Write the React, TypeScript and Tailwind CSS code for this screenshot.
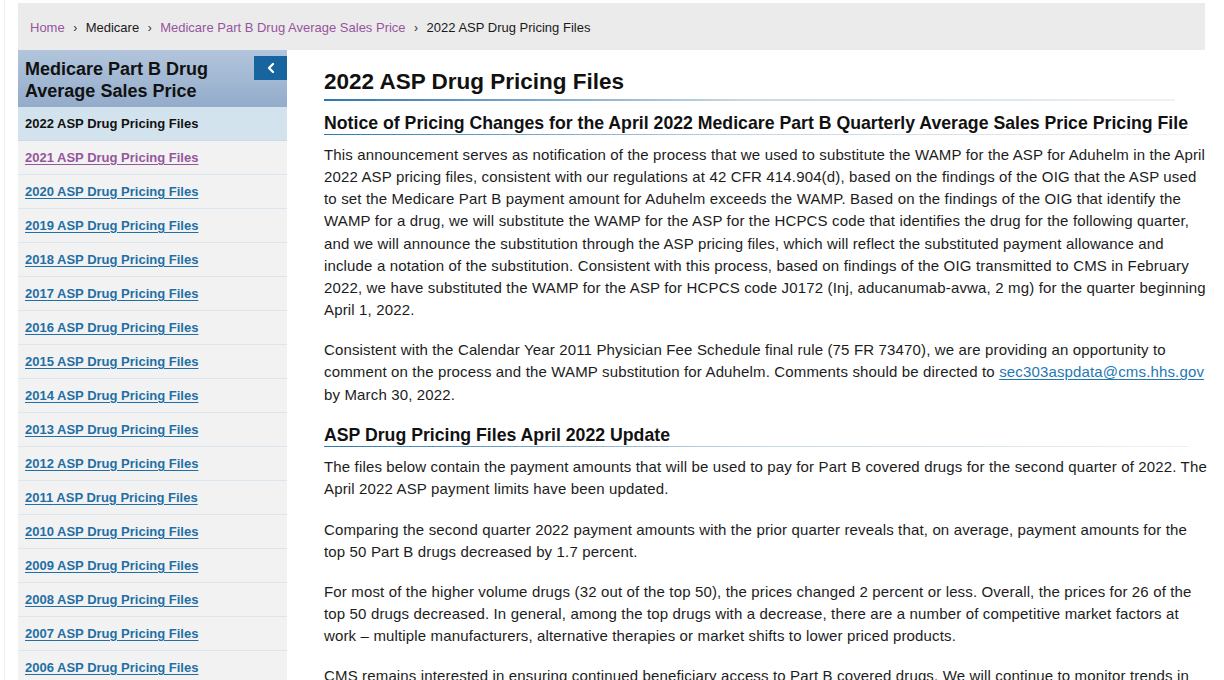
import React from "react";
import { ChevronLeft } from "lucide-react";

const years = [
  "2021", "2020", "2019", "2018", "2017", "2016", "2015", "2014", "2013",
  "2012", "2011", "2010", "2009", "2008", "2007", "2006", "2005", "2004",
];

const notice = [
  "This announcement serves as notification of the process that we used to substitute the WAMP for the ASP for Aduhelm in the April",
  "2022 ASP pricing files, consistent with our regulations at 42 CFR 414.904(d), based on the findings of the OIG that the ASP used",
  "to set the Medicare Part B payment amount for Aduhelm exceeds the WAMP. Based on the findings of the OIG that identify the",
  "WAMP for a drug, we will substitute the WAMP for the ASP for the HCPCS code that identifies the drug for the following quarter,",
  "and we will announce the substitution through the ASP pricing files, which will reflect the substituted payment allowance and",
  "include a notation of the substitution. Consistent with this process, based on findings of the OIG transmitted to CMS in February",
  "2022, we have substituted the WAMP for the ASP for HCPCS code J0172 (Inj, aducanumab-avwa, 2 mg) for the quarter beginning",
  "April 1, 2022.",
];

const update = [
  [
    "The files below contain the payment amounts that will be used to pay for Part B covered drugs for the second quarter of 2022. The",
    "April 2022 ASP payment limits have been updated.",
  ],
  [
    "Comparing the second quarter 2022 payment amounts with the prior quarter reveals that, on average, payment amounts for the",
    "top 50 Part B drugs decreased by 1.7 percent.",
  ],
  [
    "For most of the higher volume drugs (32 out of the top 50), the prices changed 2 percent or less. Overall, the prices for 26 of the",
    "top 50 drugs decreased. In general, among the top drugs with a decrease, there are a number of competitive market factors at",
    "work – multiple manufacturers, alternative therapies or market shifts to lower priced products.",
  ],
  [
    "CMS remains interested in ensuring continued beneficiary access to Part B covered drugs. We will continue to monitor trends in",
    "payment amounts and access to drugs.",
  ],
];

const Crumb = ({ text, link }: { text: string; link?: boolean }) => (
  <span className={link ? "text-[#95569c]" : "text-[#1a1a1a]"}>{text}</span>
);

const Sep = () => <span className="mx-[8.5px] text-[#333] text-[12px]">›</span>;

const Para = ({ lines, className = "" }: { lines: string[]; className?: string }) => (
  <p className={className}>
    {lines.map((l, i) => (
      <span key={i} className="block whitespace-nowrap">
        {l}
      </span>
    ))}
  </p>
);

const Sidebar = () => (
  <aside className="w-[269px] shrink-0">
    <div className="h-[57px] flex justify-between bg-gradient-to-b from-[#b2c5dc] to-[#93acca]">
      <h2 className="pl-[7px] pt-[8px] text-[18px] leading-[22px] font-bold text-[#111]">
        Medicare Part B Drug
        <br />
        Average Sales Price
      </h2>
      <button className="mt-[6px] w-[33px] h-[24px] bg-[#17649e] flex items-center justify-center">
        <ChevronLeft size={16} strokeWidth={3.5} className="text-white" />
      </button>
    </div>
    <div className="h-[34px] flex items-center pl-[7px] bg-[#d3e3ee] border-b border-[#c9dbe8]">
      <span className="text-[13px] font-bold text-[#111]">2022 ASP Drug Pricing Files</span>
    </div>
    {years.map((y, i) => (
      <div
        key={y}
        className="h-[34px] flex items-center pl-[7px] bg-[#f2f2f2] border-b border-[#dbe6ef]"
      >
        <a
          href="#"
          className={`text-[13px] font-bold underline underline-offset-2 ${
            i === 0 ? "text-[#95569c]" : "text-[#1f6fa5]"
          }`}
        >
          {y} ASP Drug Pricing Files
        </a>
      </div>
    ))}
  </aside>
);

const Heading = ({ children }: { children: React.ReactNode }) => (
  <div>
    <h3 className="text-[17.7px] leading-[20px] font-bold text-[#111] whitespace-nowrap">{children}</h3>
    <div className="mt-[1px] h-[1.5px] w-[865px] bg-gradient-to-r from-[#2a78ac] via-[#c6d7e3] to-[#eef2f5]" />
  </div>
);

export default function App() {
  return (
    <div className="w-[1224px] h-[680px] overflow-hidden bg-white font-['Liberation_Sans',Arial,sans-serif] relative">
      <div className="absolute left-[4px] top-0 bottom-0 w-px bg-[#eef2f6]" />
      <div className="pl-[18px] pt-[3px]">
        <nav className="w-[1187px] h-[47px] bg-[#ebebeb] flex items-center pl-[12px] pt-[2px] text-[13px]">
          <Crumb text="Home" link />
          <Sep />
          <Crumb text="Medicare" />
          <Sep />
          <Crumb text="Medicare Part B Drug Average Sales Price" link />
          <Sep />
          <Crumb text="2022 ASP Drug Pricing Files" />
        </nav>
        <div className="flex">
          <Sidebar />
          <main className="ml-[37px] w-[900px] text-[15px] leading-[22.15px] tracking-[0.15px] text-[#1c1c1c]">
            <h1 className="pt-[19px] text-[22.5px] leading-[26px] font-bold text-[#111] pb-[4px] tracking-normal">
              2022 ASP Drug Pricing Files
            </h1>
            <div className="h-[1.5px] w-[851px] bg-gradient-to-r from-[#2a78ac] via-[#c9d9e4] to-[#eef2f5]" />
            <div className="mt-[12px] tracking-normal">
              <Heading>
                Notice of Pricing Changes for the April 2022 Medicare Part B Quarterly Average Sales Price Pricing File
              </Heading>
            </div>
            <Para className="mt-[9px]" lines={notice} />
            <p className="mt-[18px]">
              <span className="block whitespace-nowrap">
                Consistent with the Calendar Year 2011 Physician Fee Schedule final rule (75 FR 73470), we are providing an opportunity to
              </span>
              <span className="block whitespace-nowrap">
                comment on the process and the WAMP substitution for Aduhelm. Comments should be directed to{" "}
                <a href="#" className="text-[#1f78b4] underline underline-offset-2">
                  sec303aspdata@cms.hhs.gov
                </a>
              </span>
              <span className="block whitespace-nowrap">by March 30, 2022.</span>
            </p>
            <div className="mt-[19px] tracking-normal">
              <Heading>ASP Drug Pricing Files April 2022 Update</Heading>
            </div>
            <Para className="mt-[9px]" lines={update[0]} />
            <Para className="mt-[18px]" lines={update[1]} />
            <Para className="mt-[18px]" lines={update[2]} />
            <Para className="mt-[18px]" lines={update[3]} />
          </main>
        </div>
      </div>
    </div>
  );
}
